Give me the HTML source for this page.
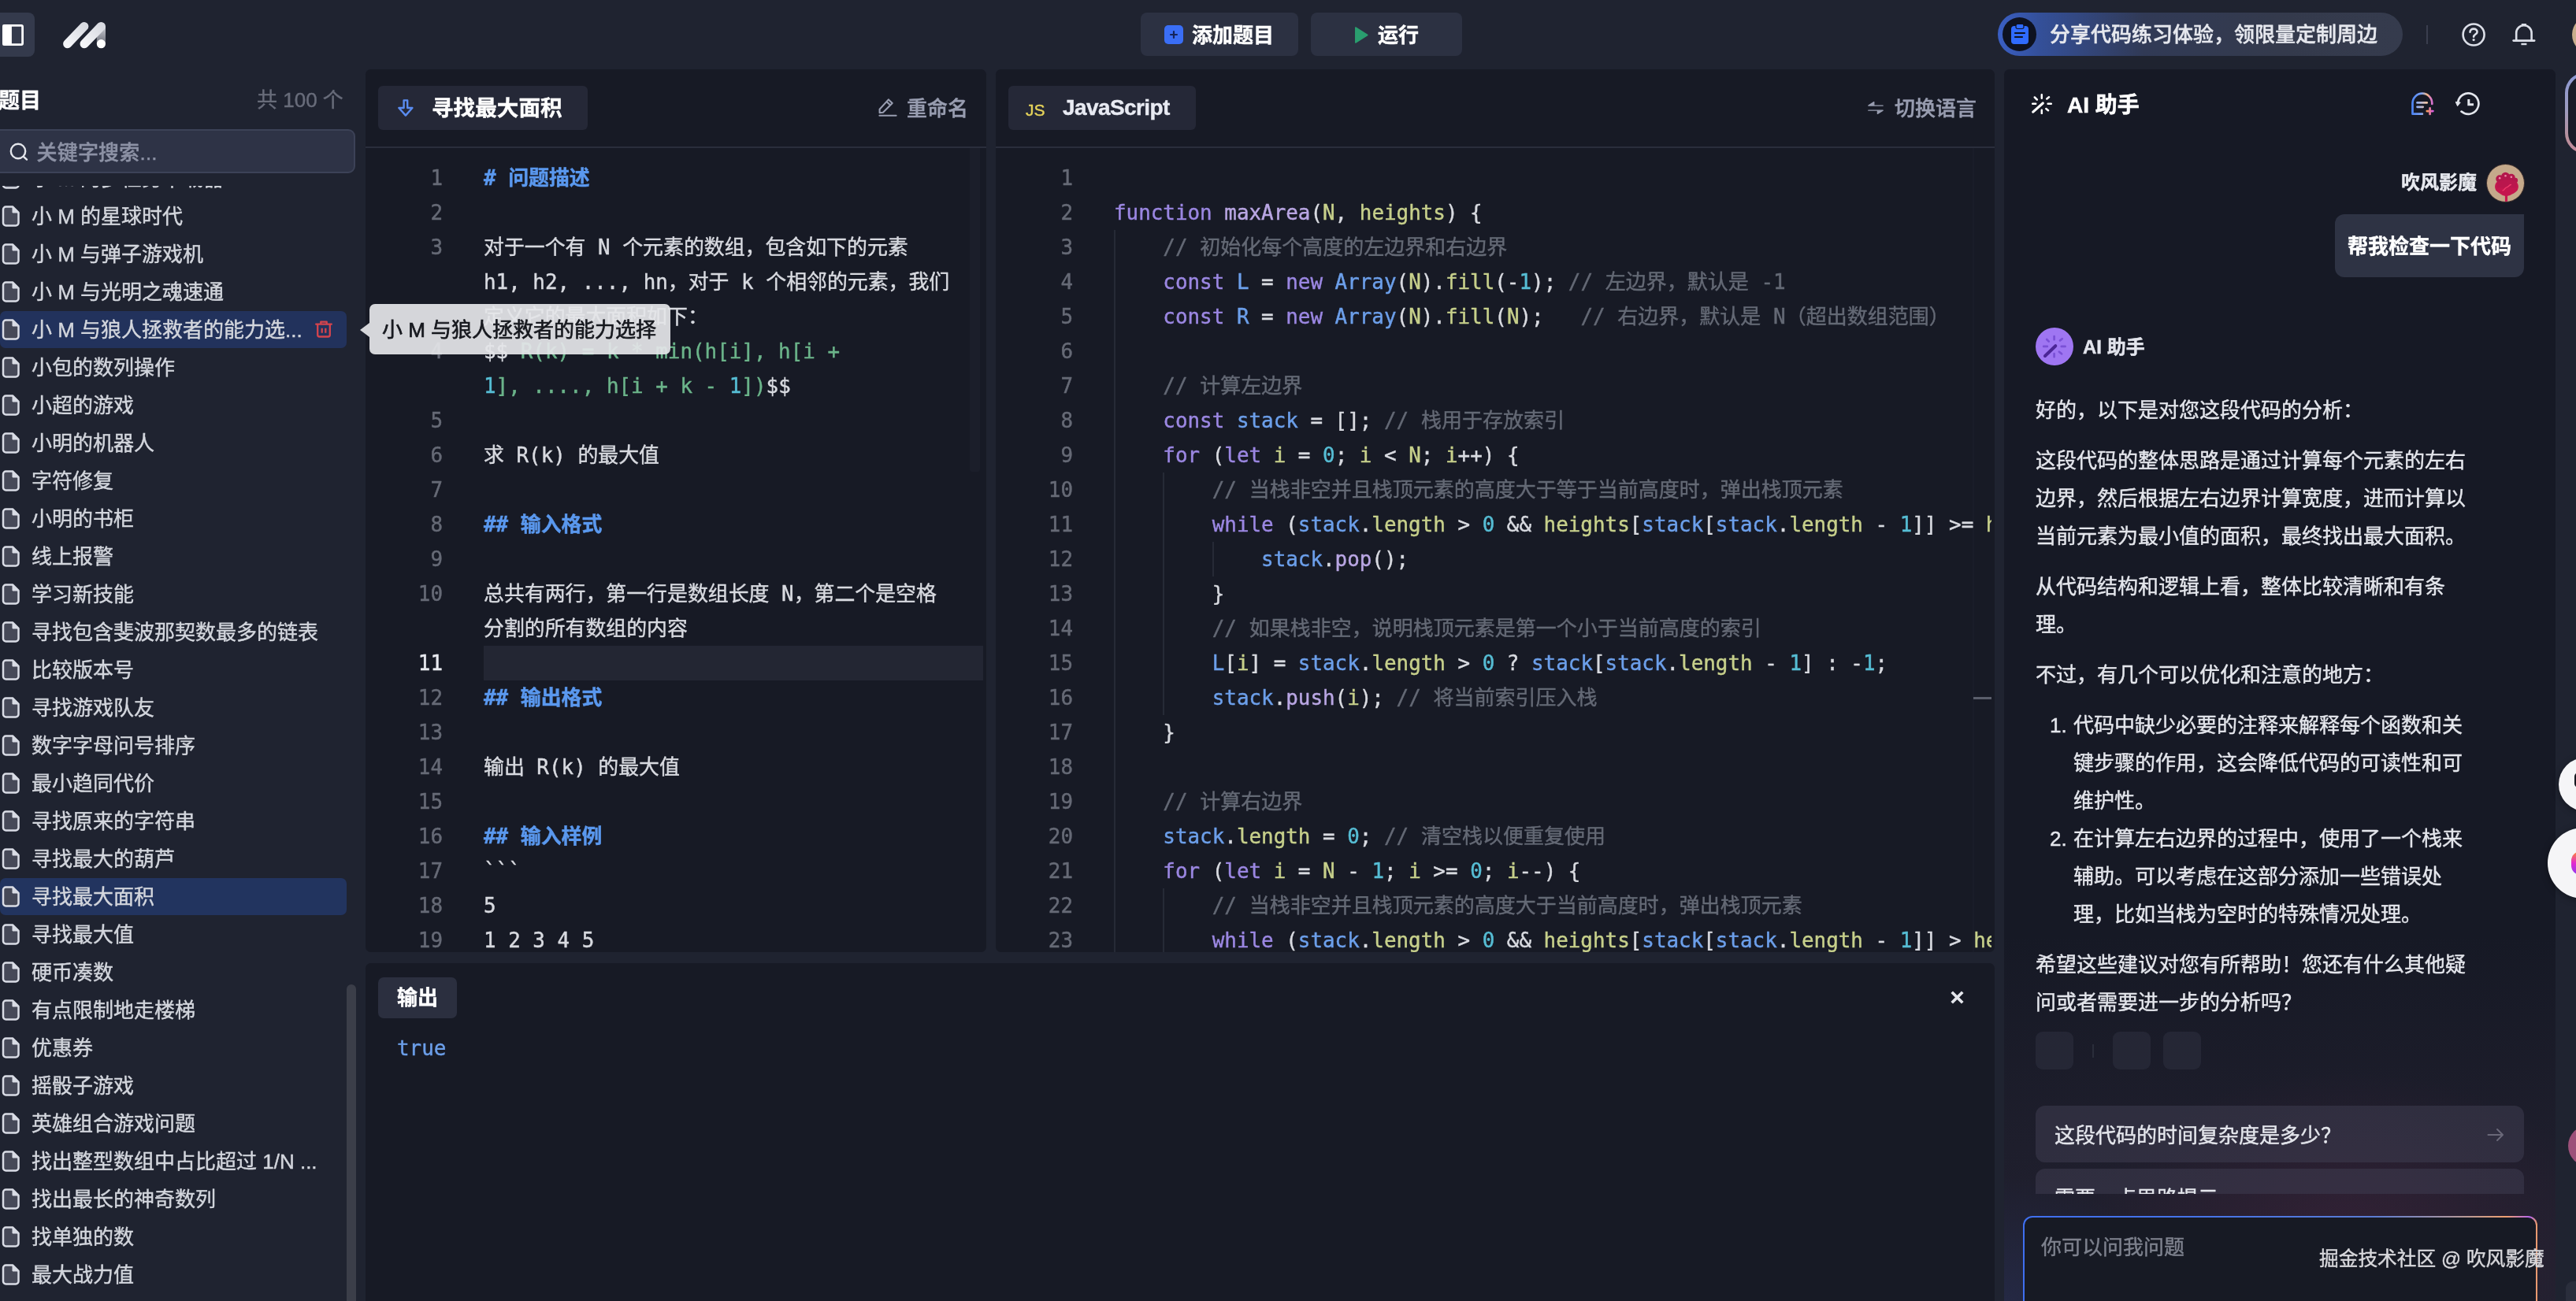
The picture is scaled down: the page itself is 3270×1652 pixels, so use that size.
<!DOCTYPE html>
<html lang="zh-CN"><head><meta charset="utf-8"><title>豆包 MarsCode 代码练习</title><style>
*{box-sizing:border-box;margin:0;padding:0}
html,body{width:3270px;height:1652px;overflow:hidden;background:#1f2330;}
body{position:relative;font-family:'Liberation Sans','Noto Sans CJK SC',sans-serif;color:#d6d9e0;font-size:26px;-webkit-font-smoothing:antialiased;-webkit-text-stroke-width:0.42px}
#root{position:absolute;left:0;top:0;width:3270px;height:1652px;overflow:hidden;will-change:transform}
.abs{position:absolute}
.panel{position:absolute;background:#171a25;border-radius:6.5px;overflow:hidden}
.btn{position:absolute;background:#2c3142;border-radius:8px}
.tab{position:absolute;background:#252837;border-radius:6px;top:21px;height:56px}
.hline{position:absolute;left:0;right:0;top:98px;height:2px;background:#2a2e3c}
.t{position:absolute;white-space:nowrap;line-height:1}
.b{font-weight:700}
.m{font-weight:500}
/* sidebar */
.item{position:absolute;left:0;width:440px;height:47.4px;border-radius:7px}
.item .tx{position:absolute;left:40px;top:0;line-height:48px;font-size:26px;color:#d3d6dd;white-space:nowrap}
.item svg{position:absolute;left:2px;top:10.5px}
/* code */
.code{font-family:'DejaVu Sans Mono','Liberation Mono','Noto Sans CJK SC',monospace;font-size:25.9px;line-height:44px;white-space:pre;color:#d8dae0}
.ln{position:absolute;text-align:right;color:#666a76;font-family:'DejaVu Sans Mono','Liberation Mono','Noto Sans CJK SC',monospace;font-size:25.9px;line-height:44px;height:44px}
.row{position:absolute;height:44px;line-height:44px;white-space:pre;font-family:'DejaVu Sans Mono','Liberation Mono','Noto Sans CJK SC',monospace;font-size:25.9px;color:#d8dae0}
.k{color:#9b87e2} .v{color:#6c9fea} .p{color:#c7d08b} .n{color:#56bdd4} .c{color:#646975;font-size:26px} .f{color:#b9a6e3}
.h{color:#5a98ee;font-weight:700} .g{color:#6bb48a}
.guide{position:absolute;width:2px;background:#262a36}
/* chat */
.para{position:absolute;left:40px;width:566px;font-size:26px;line-height:48px;color:#e4e6ec}
</style></head><body>
<div id="root">
<div class="btn" style="left:-10px;top:16px;width:54px;height:56px;background:#343a4c"></div>
<svg class="abs" style="left:2.5px;top:30.5px" width="27" height="27" viewBox="0 0 27 27"><rect x="1.4" y="1.4" width="24.2" height="24.2" rx="1.5" fill="none" stroke="#fff" stroke-width="2.8"/><rect x="0.5" y="0.5" width="11.4" height="26" fill="#fff"/></svg>
<svg class="abs" style="left:79px;top:27px" width="57" height="36" viewBox="0 0 57 36">
<defs><linearGradient id="lg1" x1="0" y1="1" x2="1" y2="0"><stop offset="0" stop-color="#f4f5f8"/><stop offset="1" stop-color="#d9dbe2"/></linearGradient>
<linearGradient id="lg2" x1="0" y1="0" x2="0" y2="1"><stop offset="0" stop-color="#c9cbd2"/><stop offset="1" stop-color="#6d707b"/></linearGradient></defs>
<line x1="49.4" y1="6.5" x2="49.4" y2="28.7" stroke="url(#lg2)" stroke-width="11.2" stroke-linecap="round"/>
<rect x="43.8" y="6.5" width="11.2" height="22" fill="url(#lg2)"/>
<line x1="6.7" y1="28.7" x2="27.8" y2="6.5" stroke="url(#lg1)" stroke-width="11.2" stroke-linecap="round"/>
<line x1="28.1" y1="28.7" x2="49.4" y2="6.5" stroke="url(#lg1)" stroke-width="11.2" stroke-linecap="round"/>
<circle cx="49.4" cy="28.7" r="5.6" fill="#fff"/></svg>
<div class="btn" style="left:1448px;top:16px;width:200px;height:55px"></div>
<svg class="abs" style="left:1478px;top:32px" width="24" height="24" viewBox="0 0 24 24"><rect width="24" height="24" rx="5" fill="#3a6ef6"/><path d="M12 8v8M8 12h8" stroke="#14245c" stroke-width="2.2" stroke-linecap="round"/></svg>
<div class="t b" style="left:1513px;top:32px;font-size:26px;color:#fff">添加题目</div>
<div class="btn" style="left:1664px;top:16px;width:192px;height:55px"></div>
<svg class="abs" style="left:1718.5px;top:32.700px" width="19" height="23" viewBox="0 0 19 23"><path d="M1.8 2 L16.800 11.5 L1.8 21 Z" fill="#2a9e6f" stroke="#2a9e6f" stroke-width="1.5" stroke-linejoin="round"/></svg>
<div class="t b" style="left:1749px;top:32px;font-size:26px;color:#fff">运行</div>
<div class="abs" style="left:2536px;top:16px;width:514px;height:55px;border-radius:28px;background:linear-gradient(90deg,#3a5fc4 0%,#34509a 10%,#313a56 36%,#343a4c 70%,#353b4d 100%)"></div>
<div class="abs" style="left:2542px;top:22px;width:43px;height:43px;border-radius:50%;background:#0e1220"></div>
<svg class="abs" style="left:2552px;top:30px" width="24" height="27" viewBox="0 0 24 27"><rect x="1" y="3" width="22" height="23" rx="4" fill="#2f6bff"/><rect x="7" y="0.5" width="10" height="6" rx="2" fill="#2f6bff" stroke="#0e1220" stroke-width="1.2"/><path d="M6 12h12M6 17h9" stroke="#0e1220" stroke-width="2.2" stroke-linecap="round"/></svg>
<div class="t m" style="left:2602px;top:31px;font-size:26px;color:#e6e8ee">分享代码练习体验，领限量定制周边</div>
<div class="abs" style="left:3080px;top:32px;width:2px;height:24px;background:#3a3e4e"></div>
<svg class="abs" style="left:3125px;top:29px" width="30" height="30" viewBox="0 0 30 30"><circle cx="15.100" cy="15" r="13.5" fill="none" stroke="#dcdfe8" stroke-width="2.6"/><path d="M10.5 11.800c0-2.600 2-4.200 4.600-4.200s4.5 1.600 4.5 3.900c0 3-4.5 3.100-4.5 6.300" fill="none" stroke="#dcdfe8" stroke-width="2.6" stroke-linecap="round"/><circle cx="15.100" cy="21.6" r="1.6" fill="#dcdfe8"/></svg>
<svg class="abs" style="left:3189px;top:28px" width="30" height="31" viewBox="0 0 30 31"><path d="M5.200 23.600V13.900a9.700 9.700 0 0 1 19.400 0V23.6" fill="none" stroke="#dcdfe8" stroke-width="2.6"/><path d="M1.600 23.600H28.2" stroke="#dcdfe8" stroke-width="2.6" stroke-linecap="round"/><path d="M11.400 28H18.4" stroke="#dcdfe8" stroke-width="2.4"/><path d="M12.700 3H17.100" stroke="#dcdfe8" stroke-width="2.2" stroke-linecap="round"/></svg>
<div class="abs" style="left:3264.5px;top:20px;width:48px;height:48px;border-radius:50%;background:#c8ad8c"></div>
<div class="t b" style="left:-2px;top:115px;font-size:27px;color:#fff">题目</div>
<div class="t" style="left:326px;top:114px;font-size:26px;color:#686c7a">共 100 个</div>
<div class="abs" style="left:-10px;top:164px;width:461px;height:56px;border-radius:9px;background:#2e3346;border:2px solid #3c4257"></div>
<svg class="abs" style="left:12px;top:181px" width="24" height="24" viewBox="0 0 24 24"><circle cx="11" cy="11" r="9.2" fill="none" stroke="#e4e6ec" stroke-width="2.4"/><path d="M18 18l4 3.6" stroke="#e4e6ec" stroke-width="2.4" stroke-linecap="round"/></svg>
<div class="t m" style="left:46.5px;top:180.5px;font-size:26px;color:#8d92a5;letter-spacing:0.2px">关键字搜索...</div>
<div class="abs" style="left:0;top:235.5px;width:460px;height:1417px;overflow:hidden">
<div class="item" style="top:-33.0px;"><svg width="24" height="28" viewBox="0 0 24 28"><path d="M5.5 1.5H14L21.5 9V22a3.5 3.5 0 0 1-3.5 3.5H5.5A3.5 3.5 0 0 1 2 22V5A3.5 3.5 0 0 1 5.5 1.5Z" fill="#464958" stroke="#d9dce5" stroke-width="2.5" stroke-linejoin="round"/><path d="M14 1.5V9H21.5Z" fill="#d9dce5" stroke="#d9dce5" stroke-width="1" stroke-linejoin="round"/></svg><div class="tx">小 M 的多任务下载器</div></div>
<div class="item" style="top:15.0px;"><svg width="24" height="28" viewBox="0 0 24 28"><path d="M5.5 1.5H14L21.5 9V22a3.5 3.5 0 0 1-3.5 3.5H5.5A3.5 3.5 0 0 1 2 22V5A3.5 3.5 0 0 1 5.5 1.5Z" fill="#464958" stroke="#d9dce5" stroke-width="2.5" stroke-linejoin="round"/><path d="M14 1.5V9H21.5Z" fill="#d9dce5" stroke="#d9dce5" stroke-width="1" stroke-linejoin="round"/></svg><div class="tx">小 M 的星球时代</div></div>
<div class="item" style="top:63.0px;"><svg width="24" height="28" viewBox="0 0 24 28"><path d="M5.5 1.5H14L21.5 9V22a3.5 3.5 0 0 1-3.5 3.5H5.5A3.5 3.5 0 0 1 2 22V5A3.5 3.5 0 0 1 5.5 1.5Z" fill="#464958" stroke="#d9dce5" stroke-width="2.5" stroke-linejoin="round"/><path d="M14 1.5V9H21.5Z" fill="#d9dce5" stroke="#d9dce5" stroke-width="1" stroke-linejoin="round"/></svg><div class="tx">小 M 与弹子游戏机</div></div>
<div class="item" style="top:111.0px;"><svg width="24" height="28" viewBox="0 0 24 28"><path d="M5.5 1.5H14L21.5 9V22a3.5 3.5 0 0 1-3.5 3.5H5.5A3.5 3.5 0 0 1 2 22V5A3.5 3.5 0 0 1 5.5 1.5Z" fill="#464958" stroke="#d9dce5" stroke-width="2.5" stroke-linejoin="round"/><path d="M14 1.5V9H21.5Z" fill="#d9dce5" stroke="#d9dce5" stroke-width="1" stroke-linejoin="round"/></svg><div class="tx">小 M 与光明之魂速通</div></div>
<div class="item" style="top:159.0px;background:#22325c;"><svg width="24" height="28" viewBox="0 0 24 28"><path d="M5.5 1.5H14L21.5 9V22a3.5 3.5 0 0 1-3.5 3.5H5.5A3.5 3.5 0 0 1 2 22V5A3.5 3.5 0 0 1 5.5 1.5Z" fill="#464958" stroke="#d9dce5" stroke-width="2.5" stroke-linejoin="round"/><path d="M14 1.5V9H21.5Z" fill="#d9dce5" stroke="#d9dce5" stroke-width="1" stroke-linejoin="round"/></svg><div class="tx">小 M 与狼人拯救者的能力选...</div></div>
<div class="item" style="top:207.0px;"><svg width="24" height="28" viewBox="0 0 24 28"><path d="M5.5 1.5H14L21.5 9V22a3.5 3.5 0 0 1-3.5 3.5H5.5A3.5 3.5 0 0 1 2 22V5A3.5 3.5 0 0 1 5.5 1.5Z" fill="#464958" stroke="#d9dce5" stroke-width="2.5" stroke-linejoin="round"/><path d="M14 1.5V9H21.5Z" fill="#d9dce5" stroke="#d9dce5" stroke-width="1" stroke-linejoin="round"/></svg><div class="tx">小包的数列操作</div></div>
<div class="item" style="top:255.0px;"><svg width="24" height="28" viewBox="0 0 24 28"><path d="M5.5 1.5H14L21.5 9V22a3.5 3.5 0 0 1-3.5 3.5H5.5A3.5 3.5 0 0 1 2 22V5A3.5 3.5 0 0 1 5.5 1.5Z" fill="#464958" stroke="#d9dce5" stroke-width="2.5" stroke-linejoin="round"/><path d="M14 1.5V9H21.5Z" fill="#d9dce5" stroke="#d9dce5" stroke-width="1" stroke-linejoin="round"/></svg><div class="tx">小超的游戏</div></div>
<div class="item" style="top:303.0px;"><svg width="24" height="28" viewBox="0 0 24 28"><path d="M5.5 1.5H14L21.5 9V22a3.5 3.5 0 0 1-3.5 3.5H5.5A3.5 3.5 0 0 1 2 22V5A3.5 3.5 0 0 1 5.5 1.5Z" fill="#464958" stroke="#d9dce5" stroke-width="2.5" stroke-linejoin="round"/><path d="M14 1.5V9H21.5Z" fill="#d9dce5" stroke="#d9dce5" stroke-width="1" stroke-linejoin="round"/></svg><div class="tx">小明的机器人</div></div>
<div class="item" style="top:351.0px;"><svg width="24" height="28" viewBox="0 0 24 28"><path d="M5.5 1.5H14L21.5 9V22a3.5 3.5 0 0 1-3.5 3.5H5.5A3.5 3.5 0 0 1 2 22V5A3.5 3.5 0 0 1 5.5 1.5Z" fill="#464958" stroke="#d9dce5" stroke-width="2.5" stroke-linejoin="round"/><path d="M14 1.5V9H21.5Z" fill="#d9dce5" stroke="#d9dce5" stroke-width="1" stroke-linejoin="round"/></svg><div class="tx">字符修复</div></div>
<div class="item" style="top:399.0px;"><svg width="24" height="28" viewBox="0 0 24 28"><path d="M5.5 1.5H14L21.5 9V22a3.5 3.5 0 0 1-3.5 3.5H5.5A3.5 3.5 0 0 1 2 22V5A3.5 3.5 0 0 1 5.5 1.5Z" fill="#464958" stroke="#d9dce5" stroke-width="2.5" stroke-linejoin="round"/><path d="M14 1.5V9H21.5Z" fill="#d9dce5" stroke="#d9dce5" stroke-width="1" stroke-linejoin="round"/></svg><div class="tx">小明的书柜</div></div>
<div class="item" style="top:447.0px;"><svg width="24" height="28" viewBox="0 0 24 28"><path d="M5.5 1.5H14L21.5 9V22a3.5 3.5 0 0 1-3.5 3.5H5.5A3.5 3.5 0 0 1 2 22V5A3.5 3.5 0 0 1 5.5 1.5Z" fill="#464958" stroke="#d9dce5" stroke-width="2.5" stroke-linejoin="round"/><path d="M14 1.5V9H21.5Z" fill="#d9dce5" stroke="#d9dce5" stroke-width="1" stroke-linejoin="round"/></svg><div class="tx">线上报警</div></div>
<div class="item" style="top:495.0px;"><svg width="24" height="28" viewBox="0 0 24 28"><path d="M5.5 1.5H14L21.5 9V22a3.5 3.5 0 0 1-3.5 3.5H5.5A3.5 3.5 0 0 1 2 22V5A3.5 3.5 0 0 1 5.5 1.5Z" fill="#464958" stroke="#d9dce5" stroke-width="2.5" stroke-linejoin="round"/><path d="M14 1.5V9H21.5Z" fill="#d9dce5" stroke="#d9dce5" stroke-width="1" stroke-linejoin="round"/></svg><div class="tx">学习新技能</div></div>
<div class="item" style="top:543.0px;"><svg width="24" height="28" viewBox="0 0 24 28"><path d="M5.5 1.5H14L21.5 9V22a3.5 3.5 0 0 1-3.5 3.5H5.5A3.5 3.5 0 0 1 2 22V5A3.5 3.5 0 0 1 5.5 1.5Z" fill="#464958" stroke="#d9dce5" stroke-width="2.5" stroke-linejoin="round"/><path d="M14 1.5V9H21.5Z" fill="#d9dce5" stroke="#d9dce5" stroke-width="1" stroke-linejoin="round"/></svg><div class="tx">寻找包含斐波那契数最多的链表</div></div>
<div class="item" style="top:591.0px;"><svg width="24" height="28" viewBox="0 0 24 28"><path d="M5.5 1.5H14L21.5 9V22a3.5 3.5 0 0 1-3.5 3.5H5.5A3.5 3.5 0 0 1 2 22V5A3.5 3.5 0 0 1 5.5 1.5Z" fill="#464958" stroke="#d9dce5" stroke-width="2.5" stroke-linejoin="round"/><path d="M14 1.5V9H21.5Z" fill="#d9dce5" stroke="#d9dce5" stroke-width="1" stroke-linejoin="round"/></svg><div class="tx">比较版本号</div></div>
<div class="item" style="top:639.0px;"><svg width="24" height="28" viewBox="0 0 24 28"><path d="M5.5 1.5H14L21.5 9V22a3.5 3.5 0 0 1-3.5 3.5H5.5A3.5 3.5 0 0 1 2 22V5A3.5 3.5 0 0 1 5.5 1.5Z" fill="#464958" stroke="#d9dce5" stroke-width="2.5" stroke-linejoin="round"/><path d="M14 1.5V9H21.5Z" fill="#d9dce5" stroke="#d9dce5" stroke-width="1" stroke-linejoin="round"/></svg><div class="tx">寻找游戏队友</div></div>
<div class="item" style="top:687.0px;"><svg width="24" height="28" viewBox="0 0 24 28"><path d="M5.5 1.5H14L21.5 9V22a3.5 3.5 0 0 1-3.5 3.5H5.5A3.5 3.5 0 0 1 2 22V5A3.5 3.5 0 0 1 5.5 1.5Z" fill="#464958" stroke="#d9dce5" stroke-width="2.5" stroke-linejoin="round"/><path d="M14 1.5V9H21.5Z" fill="#d9dce5" stroke="#d9dce5" stroke-width="1" stroke-linejoin="round"/></svg><div class="tx">数字字母问号排序</div></div>
<div class="item" style="top:735.0px;"><svg width="24" height="28" viewBox="0 0 24 28"><path d="M5.5 1.5H14L21.5 9V22a3.5 3.5 0 0 1-3.5 3.5H5.5A3.5 3.5 0 0 1 2 22V5A3.5 3.5 0 0 1 5.5 1.5Z" fill="#464958" stroke="#d9dce5" stroke-width="2.5" stroke-linejoin="round"/><path d="M14 1.5V9H21.5Z" fill="#d9dce5" stroke="#d9dce5" stroke-width="1" stroke-linejoin="round"/></svg><div class="tx">最小趋同代价</div></div>
<div class="item" style="top:783.0px;"><svg width="24" height="28" viewBox="0 0 24 28"><path d="M5.5 1.5H14L21.5 9V22a3.5 3.5 0 0 1-3.5 3.5H5.5A3.5 3.5 0 0 1 2 22V5A3.5 3.5 0 0 1 5.5 1.5Z" fill="#464958" stroke="#d9dce5" stroke-width="2.5" stroke-linejoin="round"/><path d="M14 1.5V9H21.5Z" fill="#d9dce5" stroke="#d9dce5" stroke-width="1" stroke-linejoin="round"/></svg><div class="tx">寻找原来的字符串</div></div>
<div class="item" style="top:831.0px;"><svg width="24" height="28" viewBox="0 0 24 28"><path d="M5.5 1.5H14L21.5 9V22a3.5 3.5 0 0 1-3.5 3.5H5.5A3.5 3.5 0 0 1 2 22V5A3.5 3.5 0 0 1 5.5 1.5Z" fill="#464958" stroke="#d9dce5" stroke-width="2.5" stroke-linejoin="round"/><path d="M14 1.5V9H21.5Z" fill="#d9dce5" stroke="#d9dce5" stroke-width="1" stroke-linejoin="round"/></svg><div class="tx">寻找最大的葫芦</div></div>
<div class="item" style="top:879.0px;background:#22345f;"><svg width="24" height="28" viewBox="0 0 24 28"><path d="M5.5 1.5H14L21.5 9V22a3.5 3.5 0 0 1-3.5 3.5H5.5A3.5 3.5 0 0 1 2 22V5A3.5 3.5 0 0 1 5.5 1.5Z" fill="#464958" stroke="#d9dce5" stroke-width="2.5" stroke-linejoin="round"/><path d="M14 1.5V9H21.5Z" fill="#d9dce5" stroke="#d9dce5" stroke-width="1" stroke-linejoin="round"/></svg><div class="tx">寻找最大面积</div></div>
<div class="item" style="top:927.0px;"><svg width="24" height="28" viewBox="0 0 24 28"><path d="M5.5 1.5H14L21.5 9V22a3.5 3.5 0 0 1-3.5 3.5H5.5A3.5 3.5 0 0 1 2 22V5A3.5 3.5 0 0 1 5.5 1.5Z" fill="#464958" stroke="#d9dce5" stroke-width="2.5" stroke-linejoin="round"/><path d="M14 1.5V9H21.5Z" fill="#d9dce5" stroke="#d9dce5" stroke-width="1" stroke-linejoin="round"/></svg><div class="tx">寻找最大值</div></div>
<div class="item" style="top:975.0px;"><svg width="24" height="28" viewBox="0 0 24 28"><path d="M5.5 1.5H14L21.5 9V22a3.5 3.5 0 0 1-3.5 3.5H5.5A3.5 3.5 0 0 1 2 22V5A3.5 3.5 0 0 1 5.5 1.5Z" fill="#464958" stroke="#d9dce5" stroke-width="2.5" stroke-linejoin="round"/><path d="M14 1.5V9H21.5Z" fill="#d9dce5" stroke="#d9dce5" stroke-width="1" stroke-linejoin="round"/></svg><div class="tx">硬币凑数</div></div>
<div class="item" style="top:1023.0px;"><svg width="24" height="28" viewBox="0 0 24 28"><path d="M5.5 1.5H14L21.5 9V22a3.5 3.5 0 0 1-3.5 3.5H5.5A3.5 3.5 0 0 1 2 22V5A3.5 3.5 0 0 1 5.5 1.5Z" fill="#464958" stroke="#d9dce5" stroke-width="2.5" stroke-linejoin="round"/><path d="M14 1.5V9H21.5Z" fill="#d9dce5" stroke="#d9dce5" stroke-width="1" stroke-linejoin="round"/></svg><div class="tx">有点限制地走楼梯</div></div>
<div class="item" style="top:1071.0px;"><svg width="24" height="28" viewBox="0 0 24 28"><path d="M5.5 1.5H14L21.5 9V22a3.5 3.5 0 0 1-3.5 3.5H5.5A3.5 3.5 0 0 1 2 22V5A3.5 3.5 0 0 1 5.5 1.5Z" fill="#464958" stroke="#d9dce5" stroke-width="2.5" stroke-linejoin="round"/><path d="M14 1.5V9H21.5Z" fill="#d9dce5" stroke="#d9dce5" stroke-width="1" stroke-linejoin="round"/></svg><div class="tx">优惠券</div></div>
<div class="item" style="top:1119.0px;"><svg width="24" height="28" viewBox="0 0 24 28"><path d="M5.5 1.5H14L21.5 9V22a3.5 3.5 0 0 1-3.5 3.5H5.5A3.5 3.5 0 0 1 2 22V5A3.5 3.5 0 0 1 5.5 1.5Z" fill="#464958" stroke="#d9dce5" stroke-width="2.5" stroke-linejoin="round"/><path d="M14 1.5V9H21.5Z" fill="#d9dce5" stroke="#d9dce5" stroke-width="1" stroke-linejoin="round"/></svg><div class="tx">摇骰子游戏</div></div>
<div class="item" style="top:1167.0px;"><svg width="24" height="28" viewBox="0 0 24 28"><path d="M5.5 1.5H14L21.5 9V22a3.5 3.5 0 0 1-3.5 3.5H5.5A3.5 3.5 0 0 1 2 22V5A3.5 3.5 0 0 1 5.5 1.5Z" fill="#464958" stroke="#d9dce5" stroke-width="2.5" stroke-linejoin="round"/><path d="M14 1.5V9H21.5Z" fill="#d9dce5" stroke="#d9dce5" stroke-width="1" stroke-linejoin="round"/></svg><div class="tx">英雄组合游戏问题</div></div>
<div class="item" style="top:1215.0px;"><svg width="24" height="28" viewBox="0 0 24 28"><path d="M5.5 1.5H14L21.5 9V22a3.5 3.5 0 0 1-3.5 3.5H5.5A3.5 3.5 0 0 1 2 22V5A3.5 3.5 0 0 1 5.5 1.5Z" fill="#464958" stroke="#d9dce5" stroke-width="2.5" stroke-linejoin="round"/><path d="M14 1.5V9H21.5Z" fill="#d9dce5" stroke="#d9dce5" stroke-width="1" stroke-linejoin="round"/></svg><div class="tx">找出整型数组中占比超过 1/N ...</div></div>
<div class="item" style="top:1263.0px;"><svg width="24" height="28" viewBox="0 0 24 28"><path d="M5.5 1.5H14L21.5 9V22a3.5 3.5 0 0 1-3.5 3.5H5.5A3.5 3.5 0 0 1 2 22V5A3.5 3.5 0 0 1 5.5 1.5Z" fill="#464958" stroke="#d9dce5" stroke-width="2.5" stroke-linejoin="round"/><path d="M14 1.5V9H21.5Z" fill="#d9dce5" stroke="#d9dce5" stroke-width="1" stroke-linejoin="round"/></svg><div class="tx">找出最长的神奇数列</div></div>
<div class="item" style="top:1311.0px;"><svg width="24" height="28" viewBox="0 0 24 28"><path d="M5.5 1.5H14L21.5 9V22a3.5 3.5 0 0 1-3.5 3.5H5.5A3.5 3.5 0 0 1 2 22V5A3.5 3.5 0 0 1 5.5 1.5Z" fill="#464958" stroke="#d9dce5" stroke-width="2.5" stroke-linejoin="round"/><path d="M14 1.5V9H21.5Z" fill="#d9dce5" stroke="#d9dce5" stroke-width="1" stroke-linejoin="round"/></svg><div class="tx">找单独的数</div></div>
<div class="item" style="top:1359.0px;"><svg width="24" height="28" viewBox="0 0 24 28"><path d="M5.5 1.5H14L21.5 9V22a3.5 3.5 0 0 1-3.5 3.5H5.5A3.5 3.5 0 0 1 2 22V5A3.5 3.5 0 0 1 5.5 1.5Z" fill="#464958" stroke="#d9dce5" stroke-width="2.5" stroke-linejoin="round"/><path d="M14 1.5V9H21.5Z" fill="#d9dce5" stroke="#d9dce5" stroke-width="1" stroke-linejoin="round"/></svg><div class="tx">最大战力值</div></div>
</div>
<svg class="abs" style="left:400px;top:407px" width="22" height="22" viewBox="0 0 22 22"><path d="M1.200 4.700h19.600M7.300 4.200V1.600h7.400v2.600M3.200 5.200v13a2.300 2.300 0 0 0 2.300 2.300h11a2.300 2.300 0 0 0 2.300-2.300v-13" fill="none" stroke="#d4444d" stroke-width="2.300" stroke-linejoin="round" stroke-linecap="round"/><path d="M8.700 9.800v6M13.300 9.800v6" stroke="#d4444d" stroke-width="2.300" stroke-linecap="butt"/></svg>
<div class="abs" style="left:440px;top:1250px;width:12px;height:420px;border-radius:6px;background:#3b3e49"></div>
<div class="panel" style="left:464px;top:88px;width:788px;height:1121px">
<div class="tab" style="left:16px;width:266px"></div>
<svg class="abs" style="left:39px;top:37px" width="24" height="24" viewBox="0 0 24 24"><path d="M9.600 2.400h4.600v9.600h6.200L11.900 21.600 3.400 12h6.200Z" fill="none" stroke="#5a8cf0" stroke-width="2.4" stroke-linejoin="round"/></svg>
<div class="t b" style="left:84px;top:36px;font-size:27.6px;color:#fff">寻找最大面积</div>
<svg class="abs" style="left:651px;top:37px" width="24" height="24" viewBox="0 0 24 24"><path d="M1.400 21.800H22.6" stroke="#989db0" stroke-width="2.100" stroke-linecap="round"/><path d="M12.900 1.400 17.700 5.900 6 17.800 1.600 18.200 1.600 13.800Z" fill="none" stroke="#989db0" stroke-width="2.100" stroke-linejoin="round"/><path d="M10.400 3.900 15.200 8.4" stroke="#989db0" stroke-width="2.100"/></svg>
<div class="t m" style="left:687px;top:37px;font-size:26px;color:#989db0">重命名</div>
<div class="hline"></div>
<div class="abs" style="left:766.5px;top:100px;width:13px;height:411px;border-radius:0 0 3px 3px;background:#1b1e2a"></div>
<div class="abs" style="left:150px;top:732px;width:634px;height:44px;background:#232633"></div>
<div class="ln" style="left:20px;width:78px;top:116px;color:#666a76">1</div>
<div class="row" style="left:150px;top:116px"><span class="h"># 问题描述</span></div>
<div class="ln" style="left:20px;width:78px;top:160px;color:#666a76">2</div>
<div class="ln" style="left:20px;width:78px;top:204px;color:#666a76">3</div>
<div class="row" style="left:150px;top:204px">对于一个有 N 个元素的数组，包含如下的元素</div>
<div class="row" style="left:150px;top:248px">h1, h2, ..., hn，对于 k 个相邻的元素，我们</div>
<div class="row" style="left:150px;top:292px">定义它的最大面积如下：</div>
<div class="ln" style="left:20px;width:78px;top:336px;color:#666a76">4</div>
<div class="row" style="left:150px;top:336px">$$ <span class="g">R(k) = k * min(h[i], h[i +</span></div>
<div class="row" style="left:150px;top:380px"><span class="n">1</span><span class="g">], ...., h[i + k - </span><span class="n">1</span><span class="g">])</span>$$</div>
<div class="ln" style="left:20px;width:78px;top:424px;color:#666a76">5</div>
<div class="ln" style="left:20px;width:78px;top:468px;color:#666a76">6</div>
<div class="row" style="left:150px;top:468px">求 R(k) 的最大值</div>
<div class="ln" style="left:20px;width:78px;top:512px;color:#666a76">7</div>
<div class="ln" style="left:20px;width:78px;top:556px;color:#666a76">8</div>
<div class="row" style="left:150px;top:556px"><span class="h">## 输入格式</span></div>
<div class="ln" style="left:20px;width:78px;top:600px;color:#666a76">9</div>
<div class="ln" style="left:20px;width:78px;top:644px;color:#666a76">10</div>
<div class="row" style="left:150px;top:644px">总共有两行，第一行是数组长度 N，第二个是空格</div>
<div class="row" style="left:150px;top:688px">分割的所有数组的内容</div>
<div class="ln" style="left:20px;width:78px;top:732px;color:#e8eaf0">11</div>
<div class="ln" style="left:20px;width:78px;top:776px;color:#666a76">12</div>
<div class="row" style="left:150px;top:776px"><span class="h">## 输出格式</span></div>
<div class="ln" style="left:20px;width:78px;top:820px;color:#666a76">13</div>
<div class="ln" style="left:20px;width:78px;top:864px;color:#666a76">14</div>
<div class="row" style="left:150px;top:864px">输出 R(k) 的最大值</div>
<div class="ln" style="left:20px;width:78px;top:908px;color:#666a76">15</div>
<div class="ln" style="left:20px;width:78px;top:952px;color:#666a76">16</div>
<div class="row" style="left:150px;top:952px"><span class="h">## 输入样例</span></div>
<div class="ln" style="left:20px;width:78px;top:996px;color:#666a76">17</div>
<div class="row" style="left:150px;top:996px">```</div>
<div class="ln" style="left:20px;width:78px;top:1040px;color:#666a76">18</div>
<div class="row" style="left:150px;top:1040px">5</div>
<div class="ln" style="left:20px;width:78px;top:1084px;color:#666a76">19</div>
<div class="row" style="left:150px;top:1084px">1 2 3 4 5</div>
</div>
<div class="panel" style="left:1264px;top:88px;width:1268px;height:1121px">
<div class="tab" style="left:16px;width:238px"></div>
<div class="t" style="left:38px;top:41px;font-size:21px;color:#e6d35a;-webkit-text-stroke:0.4px #e6d35a">JS</div>
<div class="t b" style="left:85px;top:35px;font-size:28px;color:#e8eaf2;letter-spacing:-0.6px">JavaScript</div>
<svg class="abs" style="left:1107px;top:41px" width="20" height="16" viewBox="0 0 20 16"><path d="M1.5 5.100H19.200M0.800 5.100 7.800 0.600V5.100Z" fill="#989db0" stroke="#989db0" stroke-width="1.300" stroke-linejoin="round" stroke-linecap="round"/><path d="M0.800 11.200H18.5M19.200 11.200 12.400 15.400V11.200Z" fill="#989db0" stroke="#989db0" stroke-width="1.300" stroke-linejoin="round" stroke-linecap="round"/></svg>
<div class="t m" style="left:1141px;top:37px;font-size:26px;color:#989db0">切换语言</div>
<div class="hline"></div>
<div class="abs" style="left:1240px;top:100px;width:2px;height:1021px;background:#1a1d29"></div>
<div class="abs" style="left:1241px;top:797px;width:23px;height:3px;background:#5a5e6b"></div>
<div class="guide" style="left:150px;top:204px;height:920px"></div>
<div class="guide" style="left:212px;top:512px;height:308px"></div>
<div class="guide" style="left:275px;top:600px;height:44px"></div>
<div class="guide" style="left:212px;top:1040px;height:90px"></div>
<div class="abs" style="left:0;top:100px;width:1264px;height:1021px;overflow:hidden">
<div class="ln" style="left:20px;width:78px;top:16px">1</div>
<div class="ln" style="left:20px;width:78px;top:60px">2</div>
<div class="row" style="left:150px;top:60px"><span class="k">function</span> <span class="f">maxArea</span>(<span class="p">N</span>, <span class="p">heights</span>) {</div>
<div class="ln" style="left:20px;width:78px;top:104px">3</div>
<div class="row" style="left:150px;top:104px">    <span class="c">// 初始化每个高度的左边界和右边界</span></div>
<div class="ln" style="left:20px;width:78px;top:148px">4</div>
<div class="row" style="left:150px;top:148px">    <span class="k">const</span> <span class="v">L</span> = <span class="k">new</span> <span class="v">Array</span>(<span class="p">N</span>).<span class="p">fill</span>(-<span class="n">1</span>); <span class="c">// 左边界，默认是 -1</span></div>
<div class="ln" style="left:20px;width:78px;top:192px">5</div>
<div class="row" style="left:150px;top:192px">    <span class="k">const</span> <span class="v">R</span> = <span class="k">new</span> <span class="v">Array</span>(<span class="p">N</span>).<span class="p">fill</span>(<span class="p">N</span>);   <span class="c">// 右边界，默认是 N（超出数组范围）</span></div>
<div class="ln" style="left:20px;width:78px;top:236px">6</div>
<div class="ln" style="left:20px;width:78px;top:280px">7</div>
<div class="row" style="left:150px;top:280px">    <span class="c">// 计算左边界</span></div>
<div class="ln" style="left:20px;width:78px;top:324px">8</div>
<div class="row" style="left:150px;top:324px">    <span class="k">const</span> <span class="v">stack</span> = []; <span class="c">// 栈用于存放索引</span></div>
<div class="ln" style="left:20px;width:78px;top:368px">9</div>
<div class="row" style="left:150px;top:368px">    <span class="k">for</span> (<span class="k">let</span> <span class="p">i</span> = <span class="n">0</span>; <span class="p">i</span> &lt; <span class="p">N</span>; <span class="p">i</span>++) {</div>
<div class="ln" style="left:20px;width:78px;top:412px">10</div>
<div class="row" style="left:150px;top:412px">        <span class="c">// 当栈非空并且栈顶元素的高度大于等于当前高度时，弹出栈顶元素</span></div>
<div class="ln" style="left:20px;width:78px;top:456px">11</div>
<div class="row" style="left:150px;top:456px">        <span class="k">while</span> (<span class="v">stack</span>.<span class="p">length</span> &gt; <span class="n">0</span> &amp;&amp; <span class="p">heights</span>[<span class="v">stack</span>[<span class="v">stack</span>.<span class="p">length</span> - <span class="n">1</span>]] &gt;= <span class="p">heights</span>[<span class="p">i</span>]) {</div>
<div class="ln" style="left:20px;width:78px;top:500px">12</div>
<div class="row" style="left:150px;top:500px">            <span class="v">stack</span>.<span class="f">pop</span>();</div>
<div class="ln" style="left:20px;width:78px;top:544px">13</div>
<div class="row" style="left:150px;top:544px">        }</div>
<div class="ln" style="left:20px;width:78px;top:588px">14</div>
<div class="row" style="left:150px;top:588px">        <span class="c">// 如果栈非空，说明栈顶元素是第一个小于当前高度的索引</span></div>
<div class="ln" style="left:20px;width:78px;top:632px">15</div>
<div class="row" style="left:150px;top:632px">        <span class="v">L</span>[<span class="p">i</span>] = <span class="v">stack</span>.<span class="p">length</span> &gt; <span class="n">0</span> ? <span class="v">stack</span>[<span class="v">stack</span>.<span class="p">length</span> - <span class="n">1</span>] : -<span class="n">1</span>;</div>
<div class="ln" style="left:20px;width:78px;top:676px">16</div>
<div class="row" style="left:150px;top:676px">        <span class="v">stack</span>.<span class="f">push</span>(<span class="p">i</span>); <span class="c">// 将当前索引压入栈</span></div>
<div class="ln" style="left:20px;width:78px;top:720px">17</div>
<div class="row" style="left:150px;top:720px">    }</div>
<div class="ln" style="left:20px;width:78px;top:764px">18</div>
<div class="ln" style="left:20px;width:78px;top:808px">19</div>
<div class="row" style="left:150px;top:808px">    <span class="c">// 计算右边界</span></div>
<div class="ln" style="left:20px;width:78px;top:852px">20</div>
<div class="row" style="left:150px;top:852px">    <span class="v">stack</span>.<span class="p">length</span> = <span class="n">0</span>; <span class="c">// 清空栈以便重复使用</span></div>
<div class="ln" style="left:20px;width:78px;top:896px">21</div>
<div class="row" style="left:150px;top:896px">    <span class="k">for</span> (<span class="k">let</span> <span class="p">i</span> = <span class="p">N</span> - <span class="n">1</span>; <span class="p">i</span> &gt;= <span class="n">0</span>; <span class="p">i</span>--) {</div>
<div class="ln" style="left:20px;width:78px;top:940px">22</div>
<div class="row" style="left:150px;top:940px">        <span class="c">// 当栈非空并且栈顶元素的高度大于当前高度时，弹出栈顶元素</span></div>
<div class="ln" style="left:20px;width:78px;top:984px">23</div>
<div class="row" style="left:150px;top:984px">        <span class="k">while</span> (<span class="v">stack</span>.<span class="p">length</span> &gt; <span class="n">0</span> &amp;&amp; <span class="p">heights</span>[<span class="v">stack</span>[<span class="v">stack</span>.<span class="p">length</span> - <span class="n">1</span>]] &gt; <span class="p">heights</span>[<span class="p">i</span>]) {</div>
</div>
</div>
<div class="panel" style="left:464px;top:1223px;width:2068px;height:460px">
<div class="abs" style="left:16px;top:17.5px;width:100px;height:52px;border-radius:7px;background:#2b2f3f"></div>
<div class="t b" style="left:40px;top:31px;font-size:26px;color:#fff">输出</div>
<div class="t" style="left:40px;top:96px;font-family:'DejaVu Sans Mono','Liberation Mono','Noto Sans CJK SC',monospace;font-size:25.9px;color:#6c9fea">true</div>
<svg class="abs" style="left:2012px;top:35px" width="17" height="17" viewBox="0 0 17 17"><path d="M1.700 1.700l13.600 13.600M15.300 1.700 1.700 15.300" stroke="#e4e6ec" stroke-width="3.700" stroke-linecap="butt"/></svg>
</div>
<div class="panel" style="left:2544px;top:88px;width:700px;height:1600px;background:#161925">
<div class="abs" style="left:0;top:1100px;width:700px;height:464px;background:linear-gradient(180deg,rgba(46,40,58,0) 0%,rgba(46,40,58,.32) 55%,rgba(46,40,58,.5) 100%)"></div>
<div class="abs" style="left:0;top:1150px;width:700px;height:414px;background:radial-gradient(ellipse 330px 200px at 62% 78%,rgba(120,40,80,.2),rgba(120,40,80,0) 100%)"></div>
<div class="abs" style="left:0;top:1364px;width:300px;height:200px;background:radial-gradient(ellipse 200px 160px at 0% 100%,rgba(50,90,190,.14),rgba(50,90,190,0) 100%)"></div>
<svg class="abs" style="left:35px;top:31px" width="26" height="26" viewBox="0 0 26 26"><g stroke="#fff" stroke-width="2.5" stroke-linecap="round"><path d="M1.800 23.200 14.300 12" stroke-width="3.100"/><path d="M12.800 1.300v4.5M12.800 20.700v4.200M1.200 12.800h4M20.600 12.800h4.200M3.800 4.5l3 3M19.300 6.5l2.700-2.300M18.300 19l2.700 2.300"/></g></svg>
<div class="t b" style="left:80px;top:32px;font-size:28px;color:#fff;-webkit-text-stroke:0.5px #fff">AI 助手</div>
<svg class="abs" style="left:516px;top:28.900px" width="32" height="31" viewBox="0 0 32 31"><defs><linearGradient id="ng" x1="0" y1="0" x2="1" y2="0"><stop offset="0" stop-color="#4f86f5"/><stop offset=".45" stop-color="#7da2f2"/><stop offset=".75" stop-color="#f3b684"/><stop offset="1" stop-color="#d46fd0"/></linearGradient><linearGradient id="ng2" gradientUnits="userSpaceOnUse" x1="8" y1="0" x2="21" y2="0"><stop offset="0" stop-color="#8fb0f8"/><stop offset="1" stop-color="#f2c4a0"/></linearGradient><linearGradient id="ng3" x1="0" y1="0" x2="1" y2="0"><stop offset="0" stop-color="#f59a5a"/><stop offset="1" stop-color="#d85be0"/></linearGradient></defs>
<path d="M14.900 27.700H2.5V14.100a12.400 12.400 0 0 1 24.800 0V15" fill="none" stroke="url(#ng)" stroke-width="2.700" stroke-linecap="round" stroke-linejoin="round"/><path d="M8.5 13.400H20.700" stroke="url(#ng2)" stroke-width="2.700" stroke-linecap="round"/><path d="M8.5 18.800H15.700" stroke="url(#ng2)" stroke-width="2.700" stroke-linecap="round"/><path d="M20.800 24.100h7.600M24.600 20.300v7.6" stroke="url(#ng3)" stroke-width="2.700" stroke-linecap="round"/></svg>
<svg class="abs" style="left:572.800px;top:28.300px" width="32" height="31" viewBox="0 0 32 31"><path d="M3.200 13.5A13.200 13.200 0 1 1 7.5 25.6" fill="none" stroke="#e2e5ec" stroke-width="2.700" stroke-linecap="round"/><path d="M0 13.300 6.300 14 2.600 18.800Z" fill="#e2e5ec" stroke="#e2e5ec" stroke-width="0.8" stroke-linejoin="round"/><path d="M16.800 10V16.800H23" fill="none" stroke="#e2e5ec" stroke-width="3" stroke-linejoin="miter"/></svg>
<div class="t b" style="left:504px;top:132px;font-size:24px;color:#e8eaf0">吹风影魔</div>
<div class="abs" style="left:611.5px;top:119.5px;width:49px;height:49px;border-radius:50%;background:#c5a98b;overflow:hidden;border:1px solid #3a2c2c"><svg width="47" height="47" viewBox="0 0 48 48"><path d="M25 38v11" stroke="#c8164f" stroke-width="3.2"/><path d="M17 38q8 6 16 0Z" fill="#c8164f"/><ellipse cx="25.5" cy="28.5" rx="15.2" ry="11" fill="#c4164e"/><circle cx="16.5" cy="18.5" r="5" fill="#b3174c"/><circle cx="24" cy="15.5" r="5.5" fill="#b3174c"/><circle cx="31.5" cy="17" r="5" fill="#b3174c"/><circle cx="36.5" cy="20.5" r="3.5" fill="#b3174c"/><path d="M13 24q12-8 25-2v8H13Z" fill="#ba164d"/><circle cx="16.5" cy="17.5" r="1.300" fill="#f08aa8"/><circle cx="24" cy="14.5" r="1.300" fill="#f08aa8"/><circle cx="31.5" cy="16" r="1.300" fill="#f08aa8"/><path d="M20.5 33.5c2.5-.5 2.5-3.5 5-4s3-3 5.5-3.5" stroke="#f23a6c" stroke-width="1.4" fill="none" stroke-linecap="round"/></svg></div>
<div class="abs" style="left:420px;top:184px;width:240px;height:80px;border-radius:12px 0 12px 12px;background:#2e3344"></div>
<div class="t b" style="left:436px;top:212px;font-size:26px;color:#fff">帮我检查一下代码</div>
<div class="abs" style="left:39.800px;top:327.600px;width:48.600px;height:48.600px;border-radius:50%;background:#9f76f2"><svg width="48.6" height="48.6" viewBox="0 0 48.600 48.6"><g stroke="#7a50d6" stroke-width="2.700" stroke-linecap="round"><path d="M12 36 25.300 23.2" stroke="#4b2596" stroke-width="4"/><path d="M23.600 11v4.200M23.600 33v4.200M10.200 23.900h4.600M32.800 23.900h4.800M14.200 15l2.600 2.600M31 16.400l2.700-2.200M29.900 30.700l3.200 2.6"/></g></svg></div>
<div class="t b" style="left:100px;top:341px;font-size:24px;color:#e2e4ec">AI 助手</div>
<div class="para" style="top:408.5px;">好的，以下是对您这段代码的分析：</div>
<div class="para" style="top:473px;">这段代码的整体思路是通过计算每个元素的左右边界，然后根据左右边界计算宽度，进而计算以当前元素为最小值的面积，最终找出最大面积。</div>
<div class="para" style="top:633px;">从代码结构和逻辑上看，整体比较清晰和有条理。</div>
<div class="para" style="top:745px;">不过，有几个可以优化和注意的地方：</div>
<div class="t" style="left:58px;top:820px;font-size:26px;color:#e4e6ec">1.</div>
<div class="para" style="top:809px;left:88px;width:518px;">代码中缺少必要的注释来解释每个函数和关键步骤的作用，这会降低代码的可读性和可维护性。</div>
<div class="t" style="left:58px;top:964px;font-size:26px;color:#e4e6ec">2.</div>
<div class="para" style="top:953px;left:88px;width:518px;">在计算左右边界的过程中，使用了一个栈来辅助。可以考虑在这部分添加一些错误处理，比如当栈为空时的特殊情况处理。</div>
<div class="para" style="top:1113px;">希望这些建议对您有所帮助！您还有什么其他疑问或者需要进一步的分析吗？</div>
<div class="abs" style="left:40px;top:1222px;width:48px;height:48px;border-radius:9px;background:rgba(52,56,72,.42)"></div>
<div class="abs" style="left:138px;top:1222px;width:48px;height:48px;border-radius:9px;background:rgba(52,56,72,.42)"></div>
<div class="abs" style="left:202px;top:1222px;width:48px;height:48px;border-radius:9px;background:rgba(52,56,72,.42)"></div>
<div class="abs" style="left:112px;top:1238px;width:2px;height:17px;background:#2a2d3a"></div>
<div class="abs" style="left:40px;top:1316px;width:620px;height:72px;border-radius:12px;background:rgba(62,60,80,.55)"></div>
<div class="t" style="left:64px;top:1340.5px;font-size:26px;color:#e4e6ec">这段代码的时间复杂度是多少？</div>
<svg class="abs" style="left:613px;top:1343.5px" width="22" height="18" viewBox="0 0 22 18"><path d="M1.5 9h18M13 2l7 7-7 7" fill="none" stroke="#6a6878" stroke-width="2" stroke-linecap="round" stroke-linejoin="round"/></svg>
<div class="abs" style="left:40px;top:1396px;width:620px;height:32px;border-radius:12px 12px 0 0;background:rgba(62,60,80,.55);overflow:hidden"><div class="t" style="left:24px;top:25px;font-size:26px;color:#e4e6ec">需要一点思路提示</div></div>
<div class="abs" style="left:24px;top:1456px;width:653px;height:200px;border-radius:12px;background:linear-gradient(90deg,#3f6ff0 0%,#4674ea 35%,#5a7cd4 68%,#b89a98 86%,#f0a070 94%,#b565ee 98.600%,#f0a060 100%);"></div>
<div class="abs" style="left:26px;top:1458px;width:649px;height:200px;border-radius:10px;background:#171a24"></div>
<div class="t" style="left:47px;top:1483px;font-size:26px;color:#7e828e">你可以问我问题</div>
<div class="t" style="left:400px;top:1499px;font-size:24.700px;color:#d8d8dc">掘金技术社区 @ 吹风影魔</div>
</div>
<div class="abs" style="left:3256px;top:92px;width:70px;height:103px;border-radius:26px;background:linear-gradient(180deg,#8c98d4 0%,#9c9cc0 45%,#b8909c 80%,#c48a9c 100%)"></div>
<div class="abs" style="left:3260px;top:96px;width:62px;height:95px;border-radius:22px;background:#191c28"></div>
<div class="abs" style="left:3248px;top:962px;width:68px;height:68px;border-radius:50%;background:#f5f5f7;box-shadow:0 2px 8px rgba(0,0,0,.35)"></div>
<div class="abs" style="left:3267.5px;top:980.5px;width:20px;height:19px;border-radius:5px;background:#15171f"></div>
<div class="abs" style="left:3234px;top:1051px;width:90px;height:90px;border-radius:50%;background:#f5f5f7;box-shadow:0 2px 10px rgba(0,0,0,.35)"></div>
<div class="abs" style="left:3264px;top:1081px;width:30px;height:30px;border-radius:12px;background:linear-gradient(180deg,#ff8a2a 0%,#e32ad0 50%,#8a3af0 100%)"></div>
<div class="abs" style="left:3260px;top:1429px;width:52px;height:52px;border-radius:50%;background:#9c5079"></div>
<div class="abs" style="left:3256.5px;top:1627px;width:40px;height:40px;border-radius:9px;background:#2a2e3c"></div>
<div class="abs" style="left:457px;top:409.5px;width:0;height:0;border-top:9px solid transparent;border-bottom:9px solid transparent;border-right:12.5px solid rgba(228,229,232,.93)"></div>
<div class="abs" style="left:469px;top:386px;width:382px;height:64px;border-radius:7px;background:rgba(228,229,232,.93)"></div>
<div class="t" style="left:485px;top:405.5px;font-size:26px;color:#16181e;-webkit-text-stroke-width:0.7px">小 M 与狼人拯救者的能力选择</div>
</div>
</body></html>
